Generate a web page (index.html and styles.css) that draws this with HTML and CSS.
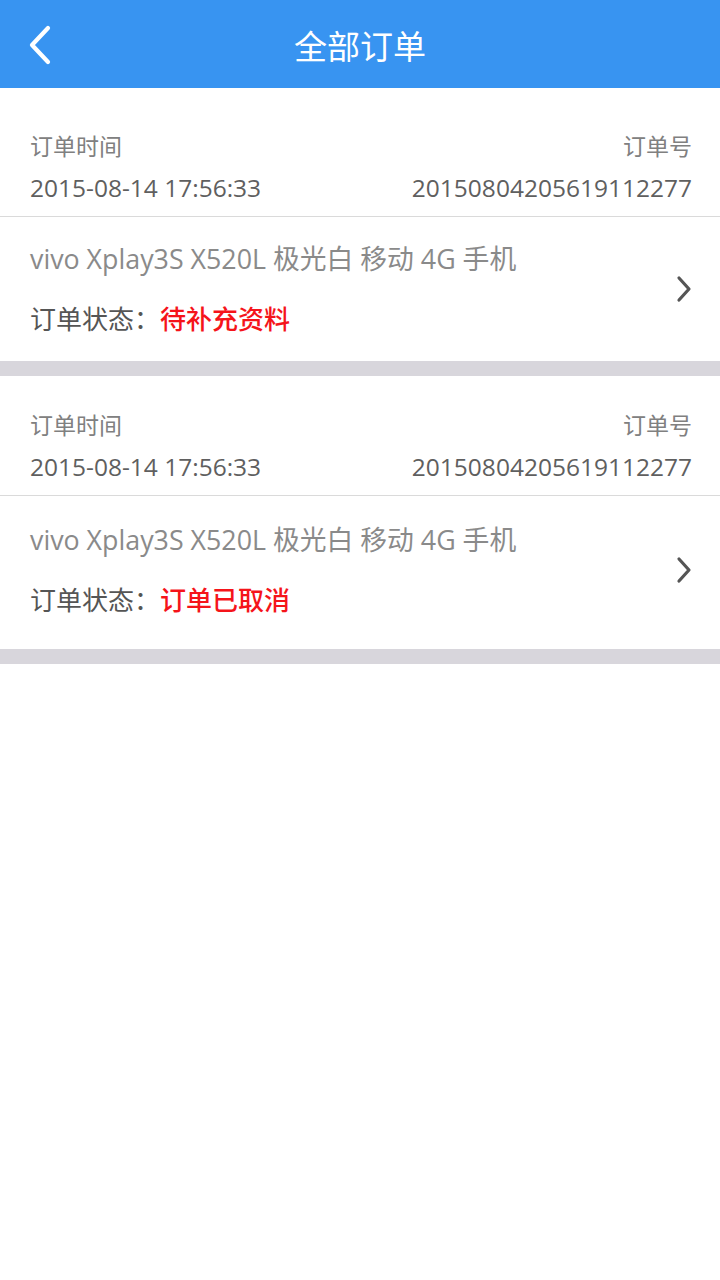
FILE: index.html
```html
<!DOCTYPE html>
<html lang="zh-CN">
<head>
<meta charset="utf-8">
<title>全部订单</title>
<link rel="stylesheet" href="styles.css">
</head>
<body>
<header class="topbar">
  <a class="back" href="#" aria-label="返回">
    <svg width="30" height="44" viewBox="0 0 30 44"><path d="M20 4 L4 21 L20 38" fill="none" stroke="#fff" stroke-width="4.2" stroke-linecap="round" stroke-linejoin="round"/></svg>
  </a>
  <h1 class="title">全部订单</h1>
</header>
<main class="list">
  <section class="order order--first">
    <div class="order-head">
      <div class="row labels"><span>订单时间</span><span>订单号</span></div>
      <div class="row values"><span>2015-08-14 17:56:33</span><span>20150804205619112277</span></div>
    </div>
    <a class="order-body" href="#">
      <div class="info">
        <p class="product">vivo Xplay3S X520L 极光白 移动 4G 手机</p>
        <p class="status">订单状态：<span class="status-value">待补充资料</span></p>
      </div>
      <svg class="arrow" width="16" height="28" viewBox="0 0 16 28"><path d="M3 3 L13 14 L3 25" fill="none" stroke="#555" stroke-width="3.2" stroke-linecap="round" stroke-linejoin="round"/></svg>
    </a>
  </section>
  <section class="order order--second">
    <div class="order-head">
      <div class="row labels"><span>订单时间</span><span>订单号</span></div>
      <div class="row values"><span>2015-08-14 17:56:33</span><span>20150804205619112277</span></div>
    </div>
    <a class="order-body" href="#">
      <div class="info">
        <p class="product">vivo Xplay3S X520L 极光白 移动 4G 手机</p>
        <p class="status">订单状态：<span class="status-value">订单已取消</span></p>
      </div>
      <svg class="arrow" width="16" height="28" viewBox="0 0 16 28"><path d="M3 3 L13 14 L3 25" fill="none" stroke="#555" stroke-width="3.2" stroke-linecap="round" stroke-linejoin="round"/></svg>
    </a>
  </section>
</main>
</body>
</html>
```
FILE: styles.css
```css
* { box-sizing: border-box; }
html, body { margin: 0; padding: 0; background: #fff; }
body {
  width: 720px;
  font-family: "Open Sans", "Noto Sans CJK SC", sans-serif;
}
.topbar {
  height: 88px;
  background: #3894f1;
  display: flex;
  align-items: center;
  justify-content: center;
  position: relative;
}
.back {
  position: absolute;
  left: 28px;
  top: 24px;
  display: block;
  line-height: 0;
}
.title {
  margin: 0;
  color: #fff;
  font-family: "Noto Sans CJK SC", sans-serif;
  font-weight: 400;
  font-size: 33px;
  line-height: 40px;
  position: relative;
  top: 1px;
}
.order {
  border-bottom: 15px solid #d8d6dc;
}
.order-head {
  padding: 33px 28px 13px 30px;
  border-bottom: 1px solid #dadada;
}
.order--first .order-head { padding-top: 42px; }
.row {
  display: flex;
  justify-content: space-between;
}
.labels {
  font-family: "Noto Sans CJK SC", sans-serif;
  font-size: 23px;
  line-height: 30px;
  color: #808080;
}
.values {
  margin-top: 13px;
  font-size: 24.5px;
  line-height: 30px;
  color: #5f5f5f;
}
.order-body {
  display: flex;
  align-items: center;
  justify-content: space-between;
  padding: 26px 28px 32px 30px;
  text-decoration: none;
}
.order--first .order-body { padding-top: 24px; padding-bottom: 25px; }
.info p { margin: 0; }
.product {
  font-size: 26.8px;
  line-height: 36px;
  color: #8a8a8a;
}
.status {
  margin-top: 23px !important;
  font-family: "Noto Sans CJK SC", sans-serif;
  font-size: 26px;
  line-height: 36px;
  color: #555;
}
.status-value {
  color: #f5141a;
  font-weight: 500;
}
.arrow { display: block; }
```
